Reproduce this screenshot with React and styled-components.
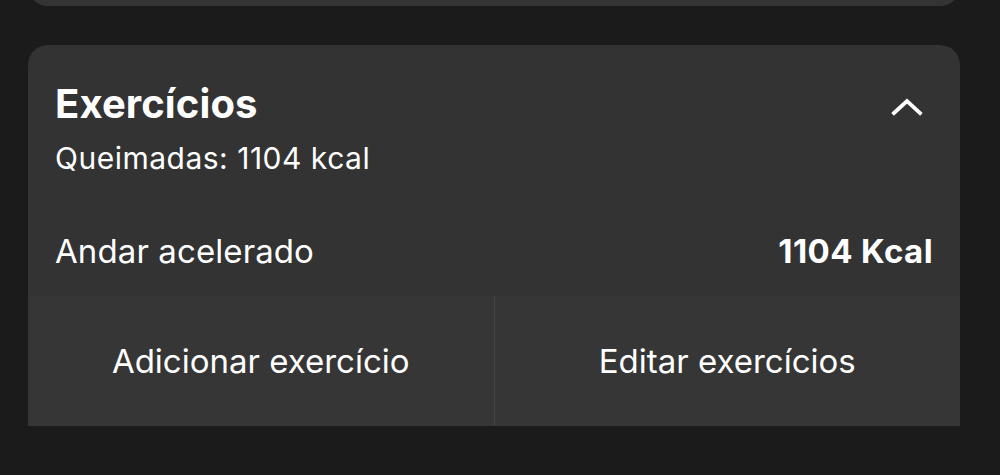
import React from "react";
import styled, { createGlobalStyle } from "styled-components";

const Global = createGlobalStyle`
  html, body { margin: 0; padding: 0; background: #1b1b1b; }
  body { font-family: Inter, "Noto Sans", "Liberation Sans", sans-serif; color: #fff; -webkit-font-smoothing: antialiased; }
`;

const Page = styled.div`
  width: 1000px;
  height: 475px;
  overflow: hidden;
  display: flex;
  flex-direction: column;
  gap: 39px;
  padding: 0 40px 0 28px;
  box-sizing: border-box;
`;

const PrevCard = styled.div`
  height: 60px;
  margin-top: -54px;
  background: #343434;
  border-radius: 20px;
`;

const Card = styled.section`
  background: #333333;
  border-radius: 20px 20px 0 0;
  display: flex;
  flex-direction: column;
  overflow: hidden;
`;

const Header = styled.div`
  display: flex;
  justify-content: space-between;
  align-items: flex-start;
  padding: 35px 33px 0 27px;
`;

const Titles = styled.div`
  display: flex;
  flex-direction: column;
`;

const Title = styled.h2`
  margin: 0;
  font-size: 40px;
  font-weight: 700;
  line-height: 48px;
  letter-spacing: 0.1px;
`;

const Sub = styled.div`
  margin-top: 12px;
  font-size: 30px;
  line-height: 36px;
  font-weight: 400;
  letter-spacing: 0.5px;
`;

const Toggle = styled.button`
  background: none;
  border: none;
  padding: 0;
  margin-top: 7px;
  width: 40px;
  height: 40px;
  display: flex;
  align-items: center;
  justify-content: center;
  cursor: pointer;
`;

const Row = styled.div`
  display: flex;
  justify-content: space-between;
  align-items: center;
  height: 120px;
  box-sizing: border-box;
  padding: 30px 27px 0;
  font-size: 33px;
  line-height: 40px;
`;

const Label = styled.span`
  letter-spacing: 0.1px;
`;

const Value = styled.span`
  font-weight: 700;
  letter-spacing: 0.4px;
`;

const Actions = styled.div`
  display: grid;
  grid-template-columns: 1fr 1px 1fr;
  height: 130px;
  background: #363636;
`;

const Divider = styled.div`
  background: #474747;
`;

const Action = styled.button`
  background: none;
  border: none;
  color: #fff;
  font-family: inherit;
  font-size: 33px;
  line-height: 40px;
  font-weight: 400;
  padding: 0;
  cursor: pointer;
`;

export default function App() {
  return (
    <>
      <Global />
      <Page>
        <PrevCard />
        <Card>
          <Header>
            <Titles>
              <Title>Exercícios</Title>
              <Sub>Queimadas: 1104 kcal</Sub>
            </Titles>
            <Toggle aria-label="Recolher">
              <svg width="32" height="18" viewBox="0 0 32 18">
                <path d="M3 15 L16 3 L29 15" fill="none" stroke="#fff" strokeWidth="3.8" strokeLinecap="square" />
              </svg>
            </Toggle>
          </Header>
          <Row>
            <Label>Andar acelerado</Label>
            <Value>1104 Kcal</Value>
          </Row>
          <Actions>
            <Action>Adicionar exercício</Action>
            <Divider />
            <Action>Editar exercícios</Action>
          </Actions>
        </Card>
      </Page>
    </>
  );
}
